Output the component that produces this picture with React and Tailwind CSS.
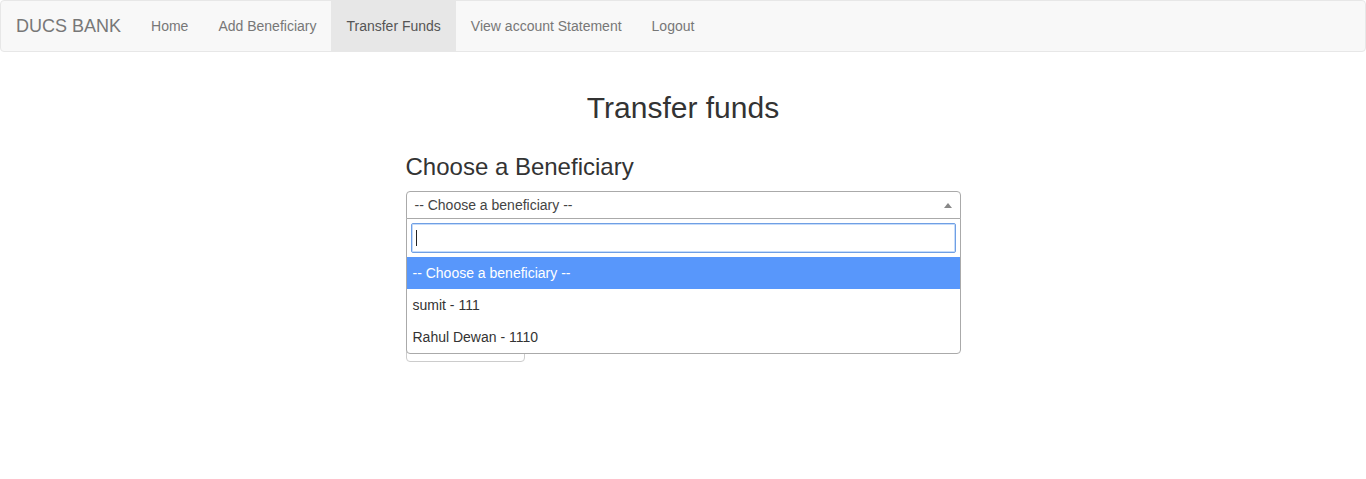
const links = [
  { label: "Home" },
  { label: "Add Beneficiary" },
  { label: "Transfer Funds", active: true },
  { label: "View account Statement" },
  { label: "Logout" },
];

const options = [
  { label: "-- Choose a beneficiary --", highlighted: true },
  { label: "sumit - 111" },
  { label: "Rahul Dewan - 1110" },
];

function Navbar() {
  return (
    <nav className="flex h-[52px] items-stretch rounded-[4px] border border-[#e7e7e7] bg-[#f8f8f8] px-[15px]">
      <a className="flex items-center pl-0 pr-[15px] text-[18px] text-[#777]">DUCS BANK</a>
      <ul className="flex items-stretch">
        {links.map((link) => (
          <li key={link.label}>
            <a
              className={
                link.active
                  ? "flex h-full items-center bg-[#e7e7e7] px-[15px] text-[14px] text-[#555]"
                  : "flex h-full items-center px-[15px] text-[14px] text-[#777]"
              }
            >
              {link.label}
            </a>
          </li>
        ))}
      </ul>
    </nav>
  );
}

function BeneficiarySelect() {
  return (
    <div className="relative">
      <div className="flex h-[28px] items-center justify-between rounded-t-[4px] border border-[#aaa] bg-white pl-[8px] pr-[8px] text-[14px] text-[#444]">
        <span>-- Choose a beneficiary --</span>
        <span className="h-0 w-0 border-x-[4px] border-b-[5px] border-x-transparent border-b-[#888]" />
      </div>

      {/* open dropdown, lies over the rest of the form */}
      <div className="absolute left-0 right-0 top-[27px] z-10 rounded-b-[4px] border border-[#aaa] bg-white">
        <div className="p-[4px]">
          <div className="flex h-[30px] items-center rounded-[2px] border border-[#6f9fe4] px-[4px] shadow-[0_0_0_1px_#c6dcfa_inset]">
            <span className="h-[16px] w-px bg-[#222]" />
          </div>
        </div>
        {options.map((option) => (
          <div
            key={option.label}
            className={
              option.highlighted
                ? "h-[32px] bg-[#5897fb] px-[6px] py-[6px] text-[14px] leading-[20px] text-white"
                : "h-[32px] px-[6px] py-[6px] text-[14px] leading-[20px] text-[#333]"
            }
          >
            {option.label}
          </div>
        ))}
      </div>
    </div>
  );
}

export default function App() {
  return (
    <div className="min-h-[479px] bg-white font-['Liberation_Sans',Arial,sans-serif] text-[#333]">
      <Navbar />

      <div className="flex flex-col pt-[39px]">
        <h2 className="text-center text-[30px] leading-[1.1]">Transfer funds</h2>

        <div className="mx-auto mt-[30px] flex w-[555px] flex-col">
          <h3 className="mb-[11px] text-[24px] leading-[1.1]">Choose a Beneficiary</h3>
          <BeneficiarySelect />

          <div className="h-[109px]" />
          <button
            type="button"
            className="h-[34px] w-[119px] rounded-[4px] border border-[#ccc] bg-white"
          />
        </div>
      </div>
    </div>
  );
}
